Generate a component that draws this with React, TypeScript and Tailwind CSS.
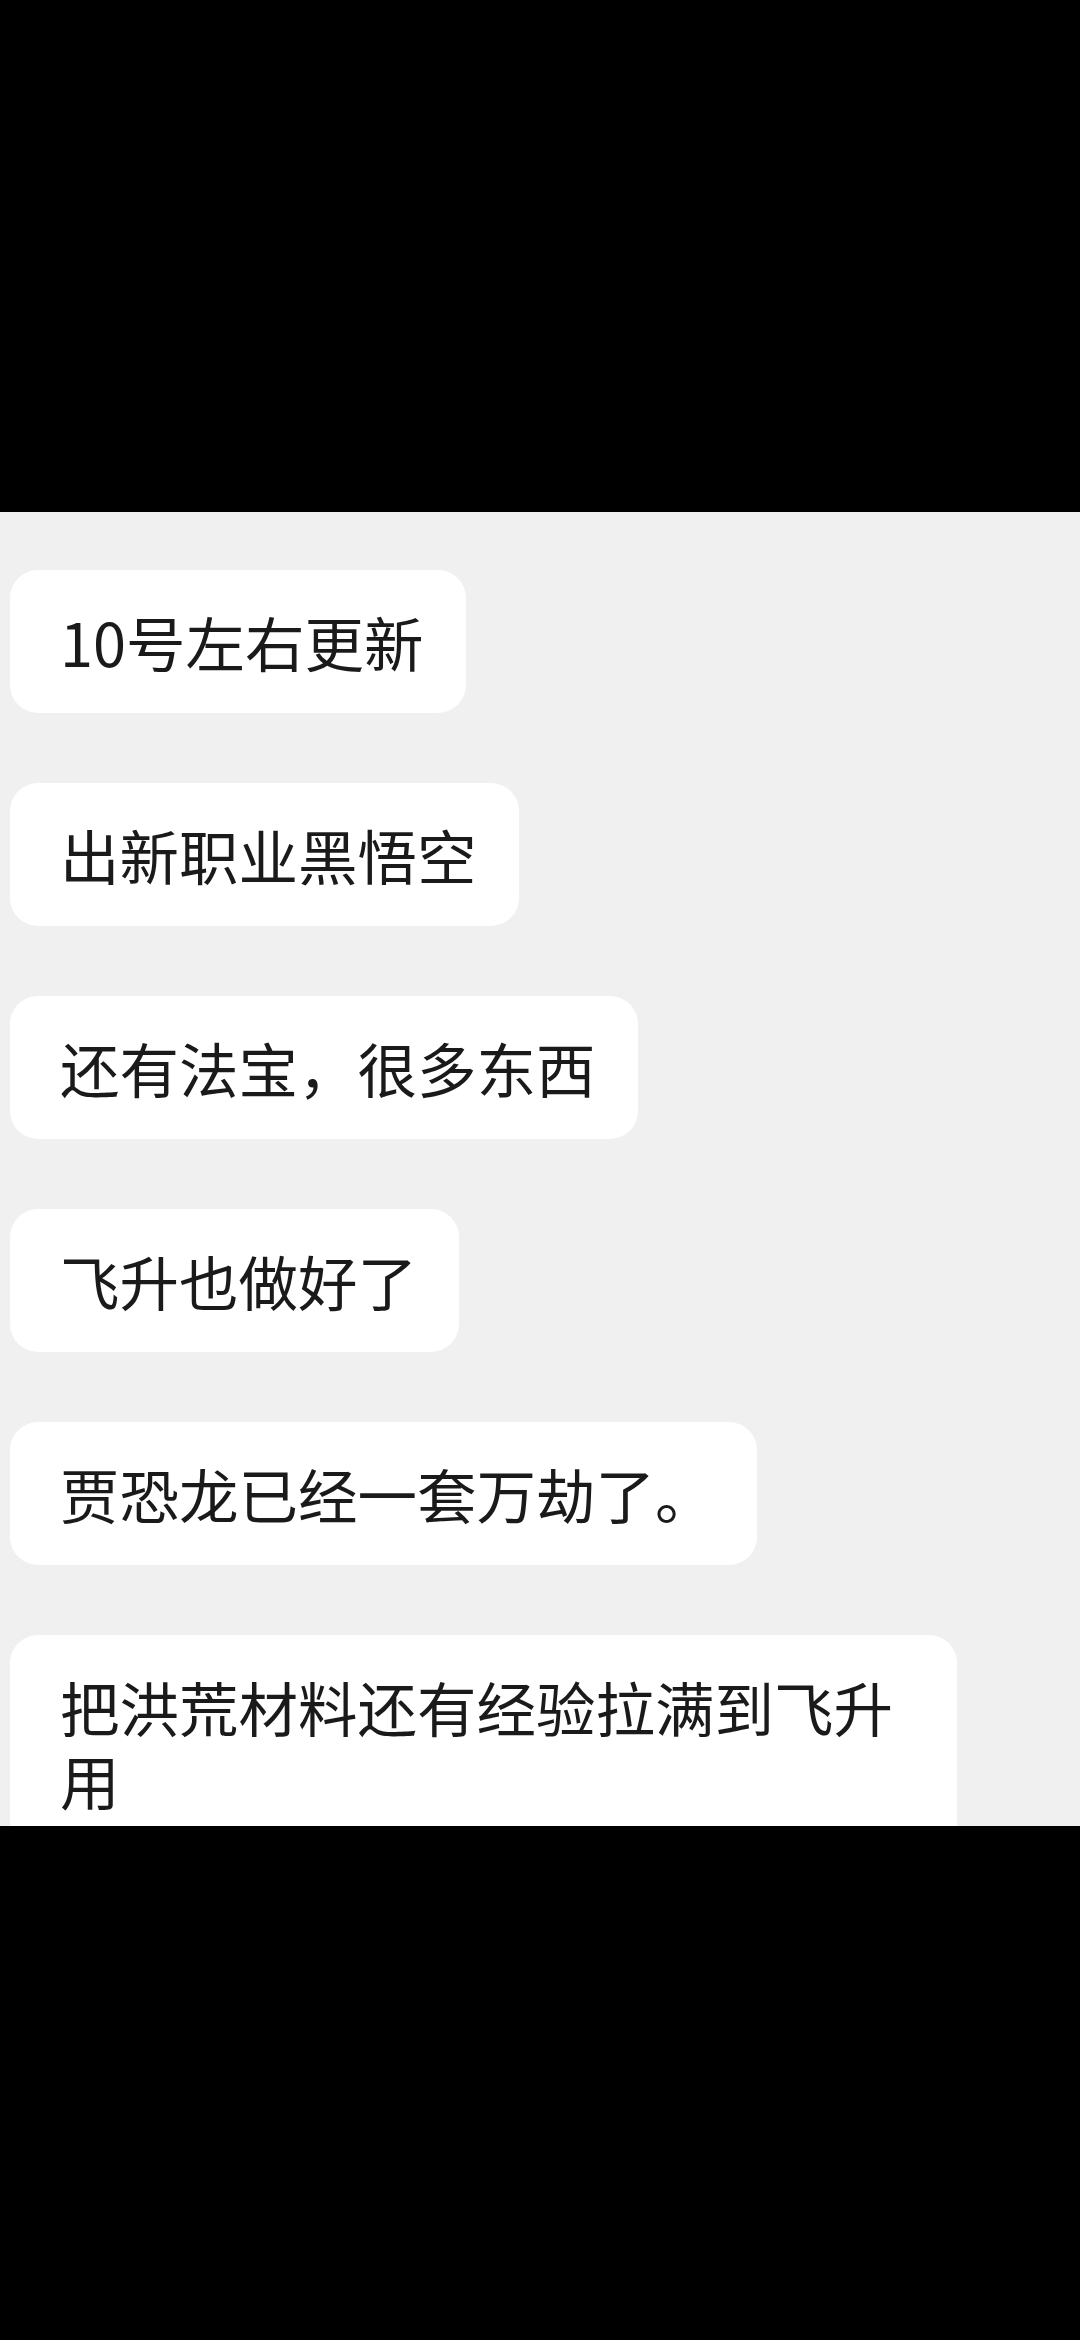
import React from 'react';

const messages: string[] = [
    '10号左右更新',
    '出新职业黑悟空',
    '还有法宝，很多东西',
    '飞升也做好了',
    '贾恐龙已经一套万劫了。',
    '把洪荒材料还有经验拉满到飞升用',
];

const Bubble: React.FC<{ text: string }> = ({ text }) => (
    <div className="bg-white rounded-[28px] pl-[50px] pr-[42px] py-[35px] max-w-[947px] text-[59.5px] leading-[73px] text-[#1a1a1a]">
        {text}
    </div>
);

export default function App() {
    return (
        <div
            className="w-[1080px] h-[2340px] bg-black flex flex-col"
            style={{ fontFamily: '"Noto Sans CJK SC", "Noto Sans", sans-serif' }}
        >
            <div className="h-[512px] shrink-0" />
            <div className="h-[1314px] shrink-0 bg-[#f0f0f0] overflow-hidden flex flex-col items-start gap-[70px] pt-[58px] pl-[10px]">
                {messages.map((m, i) => (
                    <Bubble key={i} text={m} />
                ))}
            </div>
            <div className="flex-1" />
        </div>
    );
}
